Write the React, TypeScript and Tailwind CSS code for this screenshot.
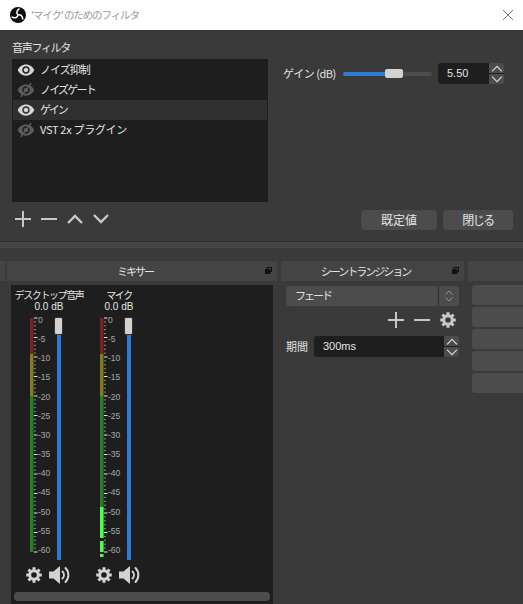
import React from "react";

const Plus = () => (
  <svg width="16" height="16" viewBox="0 0 16 16"><path d="M8 0v16M0 8h16" stroke="#c8c8c8" strokeWidth="2" /></svg>
);
const Minus = () => (
  <svg width="16" height="16" viewBox="0 0 16 16"><path d="M0 8h16" stroke="#c8c8c8" strokeWidth="2" /></svg>
);
const Chev = ({ up, w = 16, h = 10, sw = 2.4, color = "#c8c8c8" }: { up?: boolean; w?: number; h?: number; sw?: number; color?: string }) => (
  <svg width={w} height={h} viewBox="0 0 16 10">
    <path d={up ? "M1 9L8 2l7 7" : "M1 1l7 7 7-7"} stroke={color} strokeWidth={sw} fill="none" />
  </svg>
);
const Gear = ({ color = "#d2d2d2" }: { color?: string }) => (
  <svg width="16" height="16" viewBox="0 0 16 16" className="shrink-0">
    <circle cx="8" cy="8" r="4.300" fill="none" stroke={color} strokeWidth="3" />
    {[0, 45, 90, 135, 180, 225, 270, 315].map((a) => (
      <rect key={a} x="6.500" y="0.200" width="3" height="3" fill={color} transform={`rotate(${a} 8 8)`} />
    ))}
  </svg>
);
const Speaker = () => (
  <svg width="22" height="18" viewBox="0 0 22 18" fill="none">
    <path d="M0 5.5h4.5L11 0v18l-6.500-5.500H0z" fill="#d2d2d2" />
    <path d="M13.500 5.500a5 5 0 0 1 0 7" stroke="#d2d2d2" strokeWidth="2" strokeLinecap="round" />
    <path d="M16.500 2a10 10 0 0 1 0 14" stroke="#d2d2d2" strokeWidth="2" strokeLinecap="round" />
  </svg>
);
const Eye = ({ on }: { on: boolean }) => (
  <svg width="18" height="18" viewBox="0 0 24 24" className="shrink-0">
    <path
      d="M12 4.500C7 4.500 2.730 7.610 1 12c1.730 4.390 6 7.500 11 7.500s9.270-3.110 11-7.500c-1.730-4.390-6-7.500-11-7.500zM12 17c-2.760 0-5-2.240-5-5s2.240-5 5-5 5 2.240 5 5-2.240 5-5 5zm0-8c-1.660 0-3 1.340-3 3s1.340 3 3 3 3-1.340 3-3-1.340-3-3-3z"
      fill={on ? "#d6d6d6" : "#5c5c5c"}
    />
    {!on && <path d="M5 21L19 3" stroke="#5c5c5c" strokeWidth="2" />}
  </svg>
);
const ARM = "M8 8C6.300 6.800 6 3.800 9.500 1.500";
const Logo = () => (
  <svg width="16" height="16" viewBox="0 0 16 16" className="shrink-0">
    <circle cx="8" cy="8" r="8" fill="#0c0c0c" />
    <path d={ARM} fill="none" stroke="#fff" strokeWidth="1.500" />
    <path d={ARM} fill="none" stroke="#fff" strokeWidth="1.500" transform="rotate(120 8 8)" />
    <path d={ARM} fill="none" stroke="#fff" strokeWidth="1.500" transform="rotate(240 8 8)" />
  </svg>
);

const filters = [
  { name: "ノイズ抑制", on: true, cls: "tracking-[-1px]" },
  { name: "ノイズゲート", on: false, cls: "tracking-[-1.800px]" },
  { name: "ゲイン", on: true, sel: true, cls: "tracking-[-2px]" },
  { name: "VST 2x プラグイン", on: false, cls: "tracking-[-0.300px]" },
];

const Spin = () => (
  <div className="flex w-[15px] flex-col items-center justify-center self-stretch overflow-hidden rounded-r-[3px] bg-[#4c4c4c]">
    <div className="flex h-[10px] w-full items-center justify-center"><Chev up w={12} h={7} sw={1.6} color="#dcdcdc" /></div>
    <div className="h-[1px] w-full bg-[#1e1e1e]" />
    <div className="flex h-[10px] w-full items-center justify-center"><Chev w={12} h={7} sw={1.6} color="#dcdcdc" /></div>
  </div>
);

const Meter = ({ active }: { active?: boolean }) => (
  <svg width="28" height="245" viewBox="0 0 28 245" className="shrink-0">
    <rect x="4" y="2" width="3.500" height="36" fill="#7f2020" />
    <rect x="4" y="38" width="3.500" height="42" fill="#7f7f20" />
    <rect x="4" y="80" width="3.500" height="156" fill="#267f26" />
    {active && (
      <>
        <rect x="4" y="191" width="3.500" height="31" fill="#4cff4c" />
        <rect x="4" y="222" width="3.500" height="3" fill="#000" />
        <rect x="4" y="225" width="3.500" height="11" fill="#4cff4c" />
        <rect x="4" y="238" width="3.500" height="3" fill="#4cff4c" />
      </>
    )}
    {Array.from({ length: 61 }, (_, i) => (
      <rect
        key={i}
        x="8"
        y={1.5 + i * 3.9}
        width={i % 5 === 0 ? 3.500 : 2}
        height="1"
        fill={i % 5 === 0 ? "#e8e8e8" : "#8a8a8a"}
      />
    ))}
    {Array.from({ length: 13 }, (_, i) => i * 5).map((v, i) => (
      <text key={v} x="12" y={4 + i * 19.15 + 3} fontSize="8.500" fill="#a8a8a8" fontFamily="'Liberation Sans', sans-serif">
        {v === 0 ? "0" : `-${v}`}
      </text>
    ))}
  </svg>
);

const Channel = ({ name, active }: { name: string; active?: boolean }) => (
  <div className="flex w-[70px] flex-col">
    <div className="whitespace-nowrap text-center text-[10px] leading-[12px] tracking-[-1.400px] text-[#e4e4e4]">{name}</div>
    <div className="text-center font-['Liberation_Sans',sans-serif] text-[10px] leading-[12px] text-[#e4e4e4]">0.0 dB</div>
    <div className="mt-[3px] flex pl-[12px]">
      <Meter active={active} />
      <div className="flex w-[9px] flex-col items-center pt-[1px]">
        <div className="h-[18px] w-[9px] rounded-[2px] border border-[#333] bg-[#d2d2d2]" />
        <div className="h-[225px] w-[4px] bg-[#2a7dd2]" />
      </div>
    </div>
    <div className="mt-[5px] flex items-center gap-[7px] pl-[12px]">
      <Gear />
      <Speaker />
    </div>
  </div>
);

const DockTitle = ({ title, className }: { title: string; className: string }) => (
  <div className={`relative flex h-[20px] items-center justify-center bg-[#444444] pr-[14px] text-[11px] tracking-[-2px] text-[#e4e4e4] ${className}`}>
    {title}
    <svg width="7" height="7" viewBox="0 0 7 7" className="absolute right-[5px] top-[6px]">
      <rect x="2" y="0.500" width="4.500" height="4" fill="none" stroke="#111" />
      <rect x="0.500" y="2.500" width="4.500" height="4" fill="#111" stroke="#111" />
    </svg>
  </div>
);

export default function App() {
  return (
    <div className="flex h-[604px] w-[523px] flex-col overflow-hidden bg-[#3a3a3a] font-['Noto_Sans_CJK_JP','Liberation_Sans',sans-serif]">
      <div className="flex h-[30px] shrink-0 items-center bg-white pl-[10px] pr-[10px]">
        <Logo />
        <span className="ml-[5px] text-[10.500px] tracking-[-1.100px] text-[#9a9a9a]">'マイク' のためのフィルタ</span>
        <svg width="10" height="10" viewBox="0 0 10 10" className="ml-auto">
          <path d="M0 0l10 10M10 0L0 10" stroke="#777" strokeWidth="1" />
        </svg>
      </div>

      <div className="flex h-[211px] shrink-0 pl-[12px]">
        <div className="flex w-[256px] flex-col">
          <div className="mt-[9px] h-[20px] text-[11px] leading-[16px] tracking-[-1.300px] text-[#e4e4e4]">音声フィルタ</div>
          <div className="flex h-[143px] flex-col bg-[#1e1e1e] px-[1px] pt-[1px]">
            {filters.map((f) => (
              <div key={f.name} className={`flex h-[20px] items-center pl-[4px] text-[11px] text-[#e4e4e4] ${f.sel ? "bg-[#2f2f2f]" : ""}`}>
                <Eye on={f.on} />
                <span className={`ml-[5px] pb-[2px] ${f.cls}`}>{f.name}</span>
              </div>
            ))}
          </div>
          <div className="mt-[9px] flex items-center gap-[10px] pl-[3px]">
            <Plus />
            <Minus />
            <Chev up />
            <Chev />
          </div>
        </div>

        <div className="flex flex-1 flex-col pl-[15px] pr-[10px]">
          <div className="mt-[33px] flex h-[21px] items-center">
            <span className="w-[60px] whitespace-nowrap text-[11px] tracking-[-0.500px] text-[#e4e4e4]">ゲイン (dB)</span>
            <div className="flex w-[89px] items-center">
              <div className="h-[4px] w-[42px] rounded-l-[2px] bg-[#2a7dd2]" />
              <div className="h-[9px] w-[18px] rounded-[2px] bg-[#d2d2d2]" />
              <div className="h-[4px] flex-1 rounded-r-[2px] bg-[#4c4c4c]" />
            </div>
            <div className="ml-[6px] flex h-[21px] w-[66px]">
              <div className="flex flex-1 items-center rounded-l-[3px] bg-[#1e1e1e] pl-[9px] font-['Liberation_Sans',sans-serif] text-[11px] text-[#e4e4e4]">5.50</div>
              <Spin />
            </div>
          </div>
          <div className="mt-auto mb-[11px] flex justify-end gap-[6px]">
            <button className="h-[20px] w-[76px] rounded-[3px] bg-[#4c4c4c] text-[12px] leading-[20px] text-[#e4e4e4]">既定値</button>
            <button className="h-[20px] w-[70px] rounded-[3px] bg-[#4c4c4c] text-[12px] leading-[20px] tracking-[-1.500px] text-[#e4e4e4]">閉じる</button>
          </div>
        </div>
      </div>

      <div className="h-[7px] shrink-0 border-t border-[#2f2f2f] bg-[#454545]" />

      <div className="flex min-h-0 flex-1 gap-[2px] pt-[13px]">
        <div className="h-[20px] w-[5px] bg-[#444444]" />
        <div className="flex w-[270px] flex-col">
          <DockTitle title="ミキサー" className="w-full" />
          <div className="mx-[4px] mt-[4px] flex min-h-0 flex-1 flex-col bg-[#1e1e1e]">
            <div className="flex flex-1 pl-[3px] pt-[4px]">
              <Channel name="デスクトップ音声" />
              <Channel name="マイク" active />
            </div>
            <div className="mx-[3px] mb-[3px] h-[9px] rounded-[4px] bg-[#4c4c4c]" />
          </div>
        </div>
        <div className="ml-[2px] flex w-[183px] flex-col">
          <DockTitle title="シーントランジション" className="w-full" />
          <div className="mt-[5px] ml-[5px] flex h-[20px] w-[173px] self-start rounded-[3px] bg-[#4c4c4c]">
            <div className="flex flex-1 items-center pb-[2px] pl-[9px] text-[11px] tracking-[-2px] text-[#e4e4e4]">フェード</div>
            <div className="flex w-[21px] flex-col items-center justify-center gap-[2px] border-l border-[#2f2f2f]">
              <Chev up w={8} h={5} sw={1.4} color="#b8b8b8" />
              <Chev w={8} h={5} sw={1.4} color="#b8b8b8" />
            </div>
          </div>
          <div className="mt-[6px] ml-[107px] flex w-[68px] items-center gap-[10px]">
            <Plus />
            <Minus />
            <Gear color="#c8c8c8" />
          </div>
          <div className="ml-[5px] mt-[8px] flex h-[21px] w-[173px] items-center">
            <span className="w-[28px] text-[11px] text-[#e4e4e4]">期間</span>
            <div className="flex h-full flex-1 items-center rounded-l-[3px] bg-[#1e1e1e] pl-[9px] font-['Liberation_Sans',sans-serif] text-[11px] text-[#e4e4e4]">300ms</div>
            <Spin />
          </div>
        </div>
        <div className="ml-[2px] flex flex-1 flex-col">
          <div className="h-[20px] bg-[#444444]" />
          <div className="mt-[4px] flex flex-col gap-[2px] pl-[4px]">
            {[0, 1, 2, 3, 4].map((i) => (
              <div key={i} className="h-[20px] rounded-l-[3px] bg-[#4c4c4c]" />
            ))}
          </div>
        </div>
      </div>
    </div>
  );
}
